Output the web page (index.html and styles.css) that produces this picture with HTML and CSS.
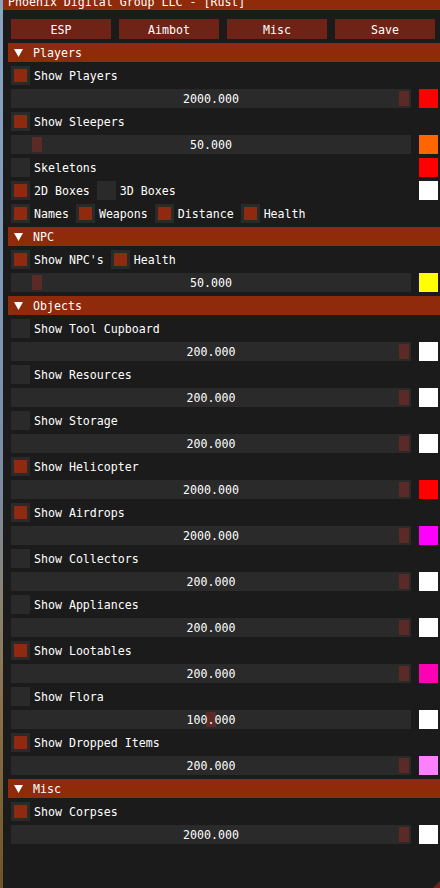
FILE: index.html
```html
<!DOCTYPE html>
<html>
<head>
<meta charset="utf-8">
<link rel="stylesheet" href="styles.css">
</head>
<body>
<div class="window">
  <div class="titlebar">Phoenix Digital Group LLC - [Rust]</div>
  <div class="content">
    <div class="buttons">
      <div class="btn"><span class="txt">ESP</span></div>
      <div class="btn"><span class="txt">Aimbot</span></div>
      <div class="btn"><span class="txt">Misc</span></div>
      <div class="btn"><span class="txt">Save</span></div>
    </div>

    <div class="header"><svg class="arrow" viewBox="0 0 9 8"><polygon points="0,0 9,0 4.5,8" fill="#fff"/></svg><span class="txt">Players</span></div>
    <div class="row"><span class="check on"></span><span class="label">Show Players</span></div>
    <div class="line"><div class="slider"><span class="grab" style="left:388px"></span><span class="val">2000.000</span></div><span class="swatch" style="background:#ff0000"></span></div>
    <div class="row"><span class="check on"></span><span class="label">Show Sleepers</span></div>
    <div class="line"><div class="slider"><span class="grab" style="left:21px"></span><span class="val">50.000</span></div><span class="swatch" style="background:#ff6600"></span></div>
    <div class="line"><div class="row opts"><span class="check"></span><span class="label">Skeletons</span></div><span class="swatch" style="background:#ff0000"></span></div>
    <div class="line"><div class="row opts"><span class="check on"></span><span class="label">2D Boxes</span><span class="check"></span><span class="label">3D Boxes</span></div><span class="swatch" style="background:#ffffff"></span></div>
    <div class="row"><span class="check on"></span><span class="label">Names</span><span class="check on"></span><span class="label">Weapons</span><span class="check on"></span><span class="label">Distance</span><span class="check on"></span><span class="label">Health</span></div>

    <div class="header"><svg class="arrow" viewBox="0 0 9 8"><polygon points="0,0 9,0 4.5,8" fill="#fff"/></svg><span class="txt">NPC</span></div>
    <div class="row"><span class="check on"></span><span class="label">Show NPC's</span><span class="check on"></span><span class="label">Health</span></div>
    <div class="line"><div class="slider"><span class="grab" style="left:21px"></span><span class="val">50.000</span></div><span class="swatch" style="background:#ffff00"></span></div>

    <div class="header"><svg class="arrow" viewBox="0 0 9 8"><polygon points="0,0 9,0 4.5,8" fill="#fff"/></svg><span class="txt">Objects</span></div>
    <div class="row"><span class="check"></span><span class="label">Show Tool Cupboard</span></div>
    <div class="line"><div class="slider"><span class="grab" style="left:388px"></span><span class="val">200.000</span></div><span class="swatch" style="background:#ffffff"></span></div>
    <div class="row"><span class="check"></span><span class="label">Show Resources</span></div>
    <div class="line"><div class="slider"><span class="grab" style="left:388px"></span><span class="val">200.000</span></div><span class="swatch" style="background:#ffffff"></span></div>
    <div class="row"><span class="check"></span><span class="label">Show Storage</span></div>
    <div class="line"><div class="slider"><span class="grab" style="left:388px"></span><span class="val">200.000</span></div><span class="swatch" style="background:#ffffff"></span></div>
    <div class="row"><span class="check on"></span><span class="label">Show Helicopter</span></div>
    <div class="line"><div class="slider"><span class="grab" style="left:388px"></span><span class="val">2000.000</span></div><span class="swatch" style="background:#ff0000"></span></div>
    <div class="row"><span class="check on"></span><span class="label">Show Airdrops</span></div>
    <div class="line"><div class="slider"><span class="grab" style="left:388px"></span><span class="val">2000.000</span></div><span class="swatch" style="background:#ff00ff"></span></div>
    <div class="row"><span class="check"></span><span class="label">Show Collectors</span></div>
    <div class="line"><div class="slider"><span class="grab" style="left:388px"></span><span class="val">200.000</span></div><span class="swatch" style="background:#ffffff"></span></div>
    <div class="row"><span class="check"></span><span class="label">Show Appliances</span></div>
    <div class="line"><div class="slider"><span class="grab" style="left:388px"></span><span class="val">200.000</span></div><span class="swatch" style="background:#ffffff"></span></div>
    <div class="row"><span class="check on"></span><span class="label">Show Lootables</span></div>
    <div class="line"><div class="slider"><span class="grab" style="left:388px"></span><span class="val">200.000</span></div><span class="swatch" style="background:#ff00b4"></span></div>
    <div class="row"><span class="check"></span><span class="label">Show Flora</span></div>
    <div class="line"><div class="slider"><span class="grab" style="left:195px"></span><span class="val">100.000</span></div><span class="swatch" style="background:#ffffff"></span></div>
    <div class="row"><span class="check on"></span><span class="label">Show Dropped Items</span></div>
    <div class="line"><div class="slider"><span class="grab" style="left:388px"></span><span class="val">200.000</span></div><span class="swatch" style="background:#ff80ff"></span></div>

    <div class="header"><svg class="arrow" viewBox="0 0 9 8"><polygon points="0,0 9,0 4.5,8" fill="#fff"/></svg><span class="txt">Misc</span></div>
    <div class="row"><span class="check on"></span><span class="label">Show Corpses</span></div>
    <div class="line"><div class="slider"><span class="grab" style="left:388px"></span><span class="val">2000.000</span></div><span class="swatch" style="background:#ffffff"></span></div>
  </div>
  <svg class="grip" viewBox="0 0 7 7"><polygon points="0,7 7,0 7,7" fill="#6e2316"/></svg>
</div>
</body>
</html>
```

FILE: styles.css
```css
html, body {
  margin: 0;
  height: 100%;
}
body {
  overflow: hidden;
  background: linear-gradient(to bottom, #8aa4c4 0%, #7f97b4 35%, #7b8aa0 55%, #8a8370 68%, #8a7048 80%, #6e5526 100%);
  font-family: "DejaVu Sans Mono", monospace;
  font-size: 11.6px;
  color: #ffffff;
}
.window {
  position: relative;
  margin-left: 3px;
  margin-top: -10px;
  height: 910px;
  background: #1b1b1b;
}
.titlebar {
  height: 20px;
  box-sizing: border-box;
  padding: 3px 0 0 5px;
  line-height: 19px;
  background: #8f2a0a;
  white-space: nowrap;
  overflow: hidden;
}
.content {
  display: flex;
  flex-direction: column;
  gap: 4px;
  padding: 9px 0 0 8px;
}
.buttons {
  display: flex;
  gap: 8px;
  height: 20px;
}
.btn {
  width: 100px;
  background: #6e2316;
  display: flex;
  align-items: center;
  justify-content: center;
}
.txt {
  line-height: 19px;
  padding-top: 2px;
}
.header {
  display: flex;
  align-items: center;
  height: 19px;
  margin-left: -3px;
  margin-right: -20px;
  background: #8f2a0a;
}
.arrow {
  width: 9px;
  height: 8px;
  margin-left: 6px;
  margin-right: 10px;
  flex: none;
}
.row {
  display: flex;
  align-items: flex-start;
  height: 19px;
  white-space: nowrap;
}
.opts {
  width: 400px;
}
.check {
  flex: none;
  width: 19px;
  height: 19px;
  box-sizing: border-box;
  padding: 3px;
  margin-right: 4px;
  background: #2a2a2a;
}
.check.on::before {
  content: "";
  display: block;
  width: 13px;
  height: 13px;
  background: #8f2a10;
}
.label {
  line-height: 19px;
  padding-top: 1px;
  margin-right: 7px;
}
.line {
  display: flex;
  gap: 8px;
  height: 19px;
}
.slider {
  position: relative;
  flex: none;
  width: 400px;
  height: 19px;
  display: flex;
  align-items: center;
  justify-content: center;
  background: #2a2a2a;
}
.grab {
  position: absolute;
  top: 2px;
  width: 10px;
  height: 15px;
  background: #5c2a26;
}
.val {
  position: relative;
  line-height: 19px;
  padding-top: 2px;
}
.swatch {
  flex: none;
  width: 19px;
  height: 19px;
}
.grip {
  position: absolute;
  left: 430px;
  top: 891px;
  width: 7px;
  height: 7px;
}
```
